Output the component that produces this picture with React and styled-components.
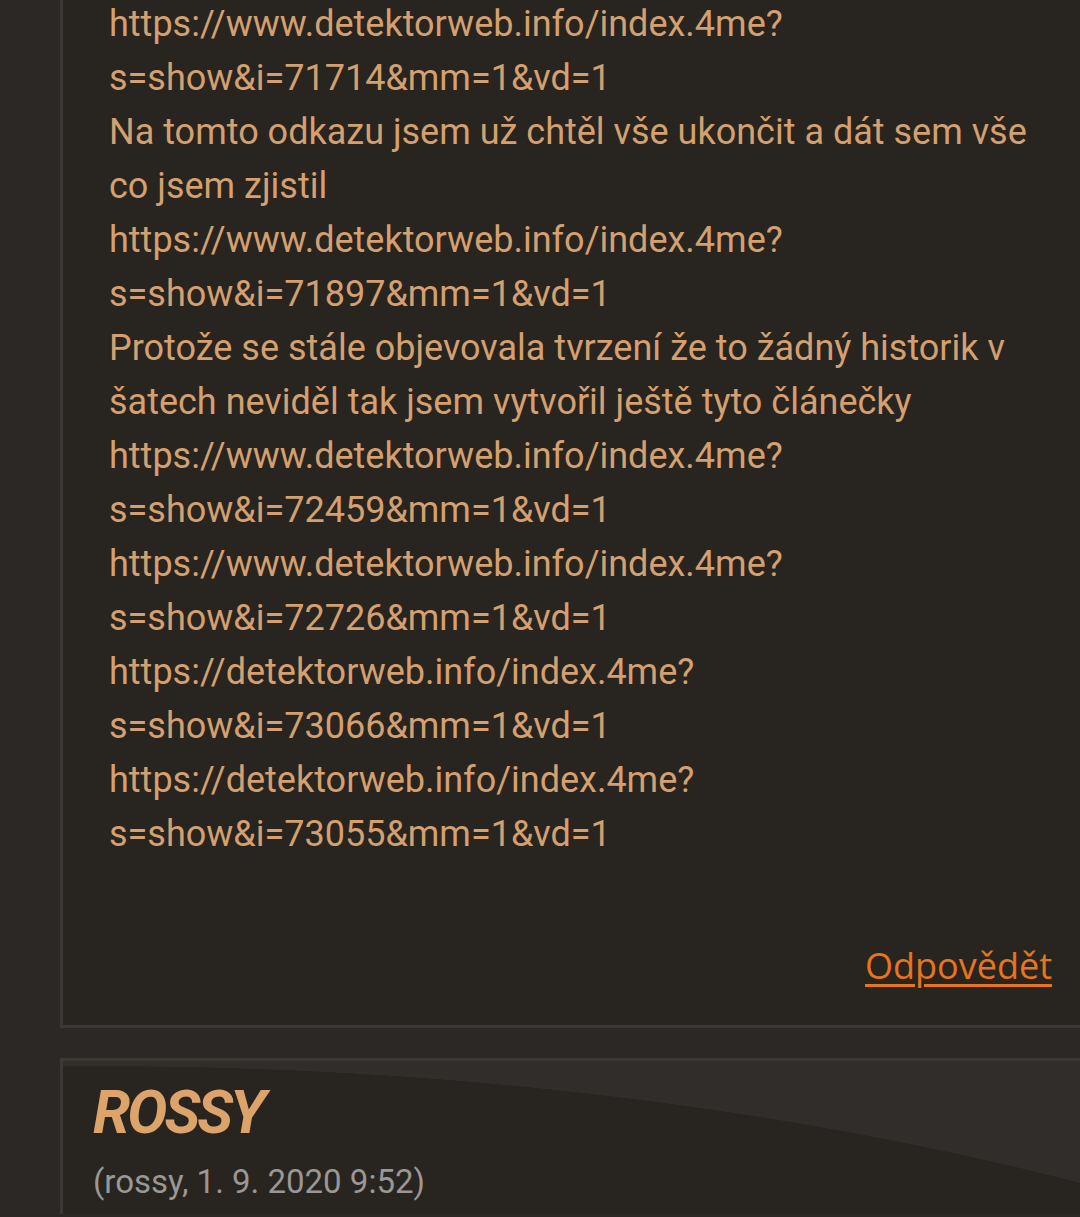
import React from 'react'
import styled, { createGlobalStyle } from 'styled-components'

const GlobalStyle = createGlobalStyle`
  html, body {
    margin: 0;
    padding: 0;
    background: #2c2825;
    overflow: hidden;
  }
  body {
    font-family: Roboto, "Liberation Sans", sans-serif;
  }
`

const lines = [
  'https://www.detektorweb.info/index.4me?',
  's=show&i=71714&mm=1&vd=1',
  'Na tomto odkazu jsem už chtěl vše ukončit a dát sem vše',
  'co jsem zjistil',
  'https://www.detektorweb.info/index.4me?',
  's=show&i=71897&mm=1&vd=1',
  'Protože se stále objevovala tvrzení že to žádný historik v',
  'šatech neviděl tak jsem vytvořil ještě tyto článečky',
  'https://www.detektorweb.info/index.4me?',
  's=show&i=72459&mm=1&vd=1',
  'https://www.detektorweb.info/index.4me?',
  's=show&i=72726&mm=1&vd=1',
  'https://detektorweb.info/index.4me?',
  's=show&i=73066&mm=1&vd=1',
  'https://detektorweb.info/index.4me?',
  's=show&i=73055&mm=1&vd=1',
]

function App() {
  return (
    <Page>
      <GlobalStyle />
      <Post>
        <Body>
          {lines.map((l, i) => (
            <Line key={i}>{l}</Line>
          ))}
        </Body>
        <Footer>
          <Reply href="#">Odpovědět</Reply>
        </Footer>
      </Post>
      <Post $next>
        <Author>ROSSY</Author>
        <Meta>(rossy, 1. 9. 2020 9:52)</Meta>
      </Post>
    </Page>
  )
}

const Page = styled.div`
  width: 1080px;
  height: 1217px;
  overflow: hidden;
  display: flex;
  flex-direction: column;
  gap: 30px;
  padding-left: 60px;
  margin-top: -3px;
  box-sizing: border-box;
`

const Post = styled.div`
  width: 1100px;
  flex-shrink: 0;
  box-sizing: border-box;
  border: 3px solid #3c3834;
  border-right: none;
  border-top: ${p => (p.$next ? '3px solid #3c3834' : 'none')};
  padding: ${p => (p.$next ? '17px 0 200px 30px' : '0 0 0 46px')};
  background: ${p =>
    p.$next
      ? 'radial-gradient(2000px 914px at 40px 919px, #282420 calc(100% - 1px), #312d2a 100%)'
      : '#282420'};
`

const Body = styled.div`
  display: flex;
  flex-direction: column;
`

const Line = styled.div`
  font-size: 36px;
  line-height: 54px;
  color: #d4a06f;
  white-space: nowrap;
`

const Footer = styled.div`
  display: flex;
  justify-content: flex-end;
  width: 943px;
  padding: 80px 0 34px 0;
`

const Reply = styled.a`
  font-family: "Open Sans", "Noto Sans", sans-serif;
  font-size: 36px;
  line-height: 50px;
  color: #e8741c;
  text-decoration: underline;
  text-underline-offset: 5px;
  text-decoration-thickness: 3px;
`

const Author = styled.h2`
  margin: 0;
  font-family: Roboto, sans-serif;
  font-weight: 700;
  font-style: italic;
  font-size: 60px;
  line-height: 70px;
  color: #dca36b;
  letter-spacing: -3px;
`

const Meta = styled.div`
  font-size: 33px;
  line-height: 48px;
  color: #9a9794;
  margin-top: 10px;
`

export default App
